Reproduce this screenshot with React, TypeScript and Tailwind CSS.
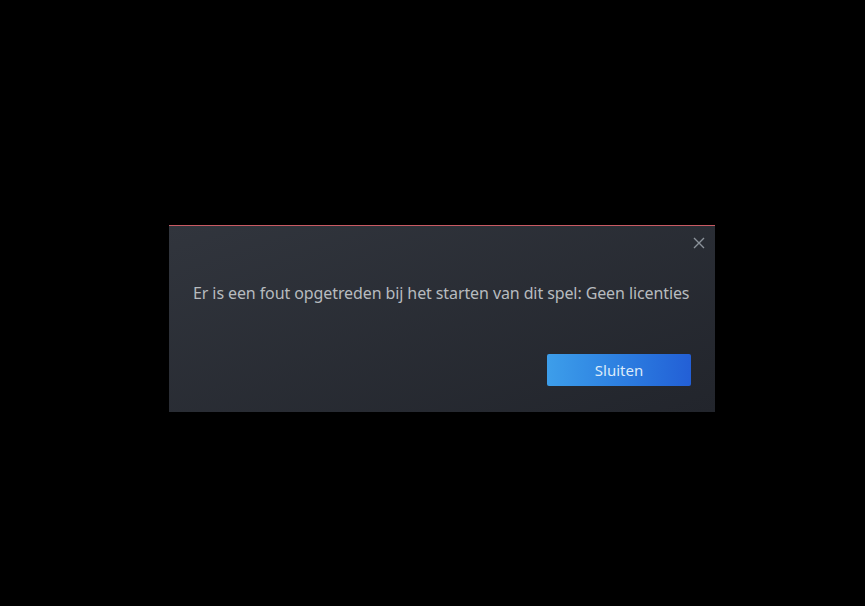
export default function App() {
  return (
    <div className="min-h-[606px] w-full bg-black pt-[225px] pl-[169px]" style={{ fontFamily: '"Noto Sans", "Liberation Sans", sans-serif' }}>
      <div className="relative w-[546px] h-[187px] border-t border-[#c85a63] bg-gradient-to-br from-[#31353d] to-[#22252c] px-6 pt-[55px]">
        <button className="absolute right-[9px] top-[10px] flex h-[14px] w-[14px] items-center justify-center text-[#8b929a]">
          <svg width="12" height="12" viewBox="0 0 12 12" fill="none" stroke="currentColor" strokeWidth="1.4">
            <path d="M1 1L11 11M11 1L1 11" />
          </svg>
        </button>
        <p className="whitespace-nowrap text-[16px] leading-6 tracking-[-0.1px] text-[#b7bbbf]">
          Er is een fout opgetreden bij het starten van dit spel: Geen licenties
        </p>
        <div className="mt-[49px] flex justify-end">
          <button className="h-[32px] w-[144px] rounded-[2px] bg-gradient-to-r from-[#3d9eea] to-[#235fd6] text-[15px] text-[#dcebfa]">
            Sluiten
          </button>
        </div>
      </div>
    </div>
  );
}
